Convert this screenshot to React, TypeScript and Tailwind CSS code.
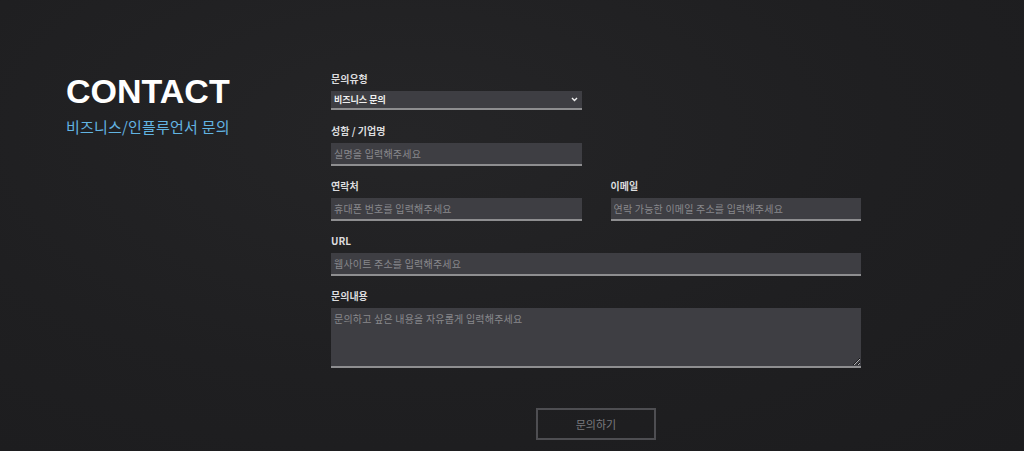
import React from "react";

const font = { fontFamily: '"Noto Sans CJK KR", "Noto Sans", sans-serif' };

function Label({ children }: { children: React.ReactNode }) {
  return (
    <div className="text-[10px] font-semibold leading-[14px] text-[#dcdcde] mb-[5px]" style={font}>
      {children}
    </div>
  );
}

function Input({ placeholder }: { placeholder: string }) {
  return (
    <input
      className="block w-full h-[23px] bg-[#3e3e43] border-b-2 border-[#8e8e90] px-[3px] text-[10px] tracking-[0.2px] text-[#ddd] placeholder:text-[#88888c] outline-none"
      style={font}
      placeholder={placeholder}
    />
  );
}

export default function App() {
  return (
    <div
      className="w-full h-[451px] overflow-hidden flex bg-[radial-gradient(ellipse_at_40%_30%,#252527_0%,#1f1f21_55%,#1c1c1e_100%)]"
      style={font}
    >
      <div className="w-[331px] pl-[66px] pt-[74px] shrink-0">
        <h1
          className="text-[34px] leading-[34px] font-bold text-white"
          style={{ fontFamily: '"Liberation Sans", Arial, sans-serif' }}
        >
          CONTACT
        </h1>
        <p className="mt-[9px] text-[15px] leading-[20px] text-[#62b4e2] whitespace-nowrap tracking-[0.2px]" style={font}>
          비즈니스/인플루언서 문의
        </p>
      </div>
      <div className="w-[530px] pt-[72px] flex flex-col">
        <div className="w-[251px]">
          <Label>문의유형</Label>
          <div className="relative">
            <select
              className="block w-full h-[19px] appearance-none bg-[#3e3e43] border-b-2 border-[#8e8e90] pl-[3px] text-[9px] font-semibold text-[#f0f0f0] outline-none"
              style={font}
              defaultValue="biz"
            >
              <option value="biz">비즈니스 문의</option>
            </select>
            <svg
              className="absolute right-[4px] top-[6px] pointer-events-none"
              width="7"
              height="5"
              viewBox="0 0 7 5"
            >
              <path d="M1 1 L3.5 3.5 L6 1" stroke="#f0f0f0" strokeWidth="1.4" fill="none" />
            </svg>
          </div>
        </div>
        <div className="w-[251px] mt-[14px]">
          <Label>성함 / 기업명</Label>
          <Input placeholder="실명을 입력해주세요" />
        </div>
        <div className="grid grid-cols-2 gap-x-[29px] mt-[13px]">
          <div>
            <Label>연락처</Label>
            <Input placeholder="휴대폰 번호를 입력해주세요" />
          </div>
          <div>
            <Label>이메일</Label>
            <Input placeholder="연락 가능한 이메일 주소를 입력해주세요" />
          </div>
        </div>
        <div className="mt-[13px]">
          <Label>URL</Label>
          <Input placeholder="웹사이트 주소를 입력해주세요" />
        </div>
        <div className="mt-[13px]">
          <Label>문의내용</Label>
          <textarea
            className="block w-full h-[60px] bg-[#3e3e43] border-b-2 border-[#8e8e90] px-[3px] pt-[3px] text-[10px] tracking-[0.2px] text-[#ddd] placeholder:text-[#88888c] outline-none"
            style={font}
            placeholder="문의하고 싶은 내용을 자유롭게 입력해주세요"
          />
        </div>
        <div className="flex justify-center mt-[40px]">
          <button
            className="w-[120px] h-[32px] border-2 border-[#4e4e52] text-[11px] text-[#7a7a7e] bg-transparent"
            style={font}
          >
            문의하기
          </button>
        </div>
      </div>
    </div>
  );
}
